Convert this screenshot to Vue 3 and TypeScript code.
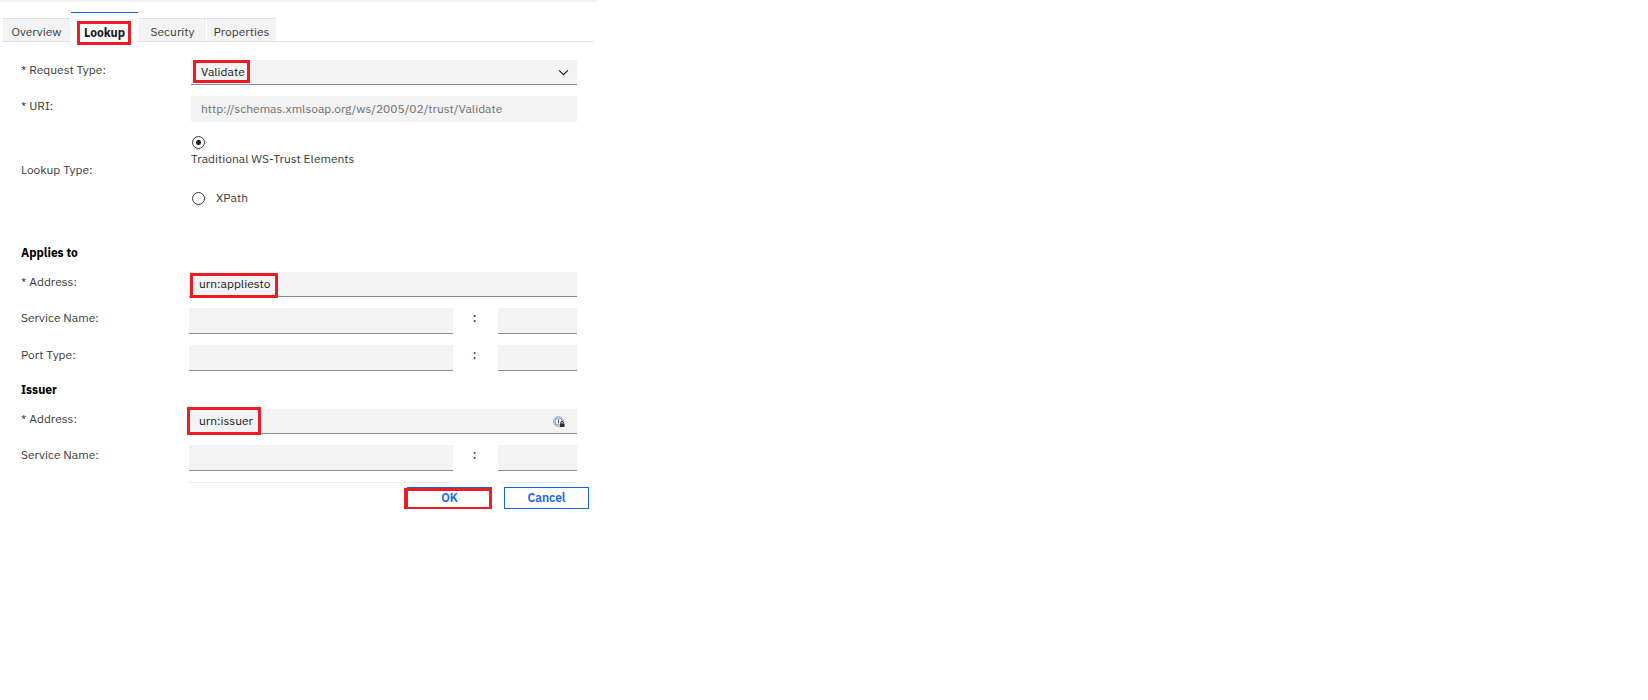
<script setup lang="ts">
import { ref } from 'vue'

const tabs = ['Overview', 'Lookup', 'Security', 'Properties']
const active = ref('Lookup')
const requestType = ref('Validate')
const uri = ref('http://schemas.xmlsoap.org/ws/2005/02/trust/Validate')
const lookupType = ref('traditional')
const appliesAddress = ref('urn:appliesto')
const issuerAddress = ref('urn:issuer')
const appliesPairs = [
  { id: 'applies-service', label: 'Service Name:' },
  { id: 'applies-port', label: 'Port Type:' },
]
</script>

<template>
  <main class="dialog">
    <nav class="tabs" role="tablist">
      <button
        v-for="tab in tabs"
        :key="tab"
        type="button"
        role="tab"
        class="tab"
        :class="{ active: tab === active }"
        :aria-selected="tab === active"
        @click="active = tab"
      >
        {{ tab }}
        <span v-if="tab === 'Lookup'" class="mark mark-tab"></span>
      </button>
    </nav>

    <form @submit.prevent>
      <div class="body">
        <div class="row inset">
          <label for="request-type">* Request Type:</label>
          <div class="field">
            <select id="request-type" v-model="requestType">
              <option>Validate</option>
            </select>
            <svg class="chevron" viewBox="0 0 10 6" aria-hidden="true">
              <path d="M1 1l4 4 4-4" fill="none" stroke="#161616" />
            </svg>
            <span class="mark mark-select"></span>
          </div>
        </div>

        <div class="row inset">
          <label for="uri">* URI:</label>
          <div class="field">
            <input id="uri" v-model="uri" class="text locked" type="text" readonly />
          </div>
        </div>

        <div class="row inset lookup" role="radiogroup" aria-labelledby="lookup-label">
          <span id="lookup-label" class="label">Lookup Type:</span>
          <div class="choices">
            <div class="choice stacked">
              <input id="traditional" v-model="lookupType" type="radio" name="lookup" value="traditional" />
              <label for="traditional">Traditional WS-Trust Elements</label>
            </div>
            <div class="choice">
              <input id="xpath" v-model="lookupType" type="radio" name="lookup" value="xpath" />
              <label for="xpath">XPath</label>
            </div>
          </div>
        </div>

        <h2 class="spaced">Applies to</h2>
        <div class="row">
          <label for="applies-address">* Address:</label>
          <div class="field">
            <input id="applies-address" v-model="appliesAddress" class="text" type="text" />
            <span class="mark mark-applies"></span>
          </div>
        </div>
        <div v-for="pair in appliesPairs" :key="pair.id" class="row">
          <label :for="pair.id">{{ pair.label }}</label>
          <div class="pair">
            <input :id="pair.id" class="text" type="text" />
            <span class="colon">:</span>
            <input class="text" type="text" :aria-label="pair.label" />
          </div>
        </div>

        <h2>Issuer</h2>
        <div class="row">
          <label for="issuer-address">* Address:</label>
          <div class="field">
            <input id="issuer-address" v-model="issuerAddress" class="text" type="text" />
            <svg class="key" viewBox="0 0 12 12" aria-hidden="true">
              <circle cx="5.5" cy="5.5" r="5" fill="#f8fbff" stroke="#a9adb2" />
              <circle cx="5.5" cy="5.5" r="3.5" fill="#fff" stroke="#55a4ee" stroke-width="1.2" />
              <path d="M5.5 3.3v4.2" stroke="#555" stroke-width="1.2" />
              <path d="M7.6 7.5V6.7a1.4 1.4 0 0 1 2.8 0v.8" fill="none" stroke="#333" />
              <path d="M7 7.5h4.5V11H7z" fill="#2b2b2b" />
            </svg>
            <span class="mark mark-issuer"></span>
          </div>
        </div>
        <div class="row">
          <label for="issuer-service">Service Name:</label>
          <div class="pair">
            <input id="issuer-service" class="text" type="text" />
            <span class="colon">:</span>
            <input class="text" type="text" aria-label="Service Name:" />
          </div>
        </div>
        <div class="row">
          <span></span>
          <div class="pair edge"><i></i><span></span><i></i></div>
        </div>
      </div>

      <footer>
        <button type="submit" class="action">OK<span class="mark mark-ok"></span></button>
        <button type="button" class="action">Cancel</button>
      </footer>
    </form>
  </main>
</template>

<style>
body {
  margin: 0;
  background: #fff;
}
</style>

<style scoped>
.dialog {
  box-sizing: border-box;
  max-width: 597px;
  border-top: 2px solid #f3f3f3;
  padding: 10px 4px 0 3px;
  font: 12px/20px "IBM Plex Sans", "Noto Sans", sans-serif;
  color: #393939;
}
button,
input,
select {
  font: inherit;
  color: inherit;
  margin: 0;
  border-radius: 0;
}
.tabs {
  display: flex;
  align-items: flex-end;
  gap: 1px;
  border-bottom: 1px solid #e0e0e0;
}
.tab {
  position: relative;
  box-sizing: border-box;
  flex: 0 0 67px;
  height: 23px;
  padding: 4px 0 0;
  border: 0;
  border-top: 1px solid #e0e0e0;
  background: #f3f3f3;
  line-height: 18px;
}
.tab:last-child {
  flex-basis: 69px;
}
.tab.active {
  height: 30px;
  margin-bottom: -1px;
  padding-top: 10px;
  border-top-color: #0f62fe;
  background: #fff;
  color: #161616;
  font-weight: 700;
}
.mark {
  position: absolute;
  box-sizing: border-box;
  border: 3px solid #ed1c24;
  pointer-events: none;
}
.mark-tab {
  inset: 8px 7px -3px 6px;
}
.mark-select {
  left: 2px;
  top: 0;
  width: 57px;
  height: 23px;
}
.mark-applies {
  left: 1px;
  top: 1px;
  width: 88px;
  height: 25px;
}
.mark-issuer {
  left: -2px;
  top: -2px;
  width: 74px;
  height: 28px;
}
.mark-ok {
  inset: 0 -1px -2px -4px;
}
.body {
  display: flex;
  flex-direction: column;
  gap: 11px;
  padding: 18px 16px 0 18px;
}
.row {
  display: grid;
  grid-template-columns: 168px minmax(0, 1fr);
  align-items: start;
}
.row.inset {
  grid-template-columns: 170px minmax(0, 1fr);
}
.field {
  position: relative;
}
.text,
select {
  display: block;
  box-sizing: border-box;
  width: 100%;
  min-width: 0;
  height: 25px;
  padding: 0 10px;
  border: 0;
  border-bottom: 1px solid #8d8d8d;
  background: #f3f3f3;
  color: #161616;
  outline: 0;
}
.text {
  padding-bottom: 2px;
}
select {
  appearance: none;
}
.inset .text,
select {
  padding-left: 10px;
}
.text.locked {
  height: 26px;
  border-bottom: 0;
  color: #6f6f6f;
}
.chevron {
  position: absolute;
  right: 8px;
  top: 9px;
  width: 11px;
  height: 7px;
}
.key {
  position: absolute;
  right: 12px;
  top: 7px;
  width: 12px;
  height: 12px;
}
.lookup {
  align-items: center;
  padding-top: 3px;
}
.lookup .label {
  padding-bottom: 5px;
}
.choice {
  display: flex;
  align-items: center;
  gap: 11px;
}
.choice + .choice {
  margin-top: 19px;
}
.stacked {
  flex-direction: column;
  align-items: flex-start;
  gap: 0;
}
.choice input {
  appearance: none;
  box-sizing: border-box;
  width: 13px;
  height: 13px;
  margin-left: 1px;
  border: 1px solid #393939;
  border-radius: 50%;
  background: #fff;
}
.choice input:checked {
  background: radial-gradient(circle, #161616 0 2px, #fff 3px);
}
h2 {
  margin: -2px 0 -2px;
  font-size: 12px;
  line-height: 20px;
  color: #000;
}
h2.spaced {
  margin-top: 24px;
}
.pair {
  display: grid;
  grid-template-columns: minmax(0, 264px) 45px minmax(0, 79px);
}
.pair .text {
  height: 26px;
}
.colon {
  padding-right: 2px;
  text-align: center;
  font-weight: 500;
}
.edge i {
  height: 1px;
  background: #efefef;
}
footer {
  display: flex;
  justify-content: flex-end;
  gap: 12px;
  padding: 4px 4px 0 0;
}
.action {
  position: relative;
  box-sizing: border-box;
  width: 85px;
  height: 22px;
  padding: 0;
  border: 1px solid #0f62fe;
  background: #fff;
  color: #0f62fe;
  font-weight: 600;
}
</style>
